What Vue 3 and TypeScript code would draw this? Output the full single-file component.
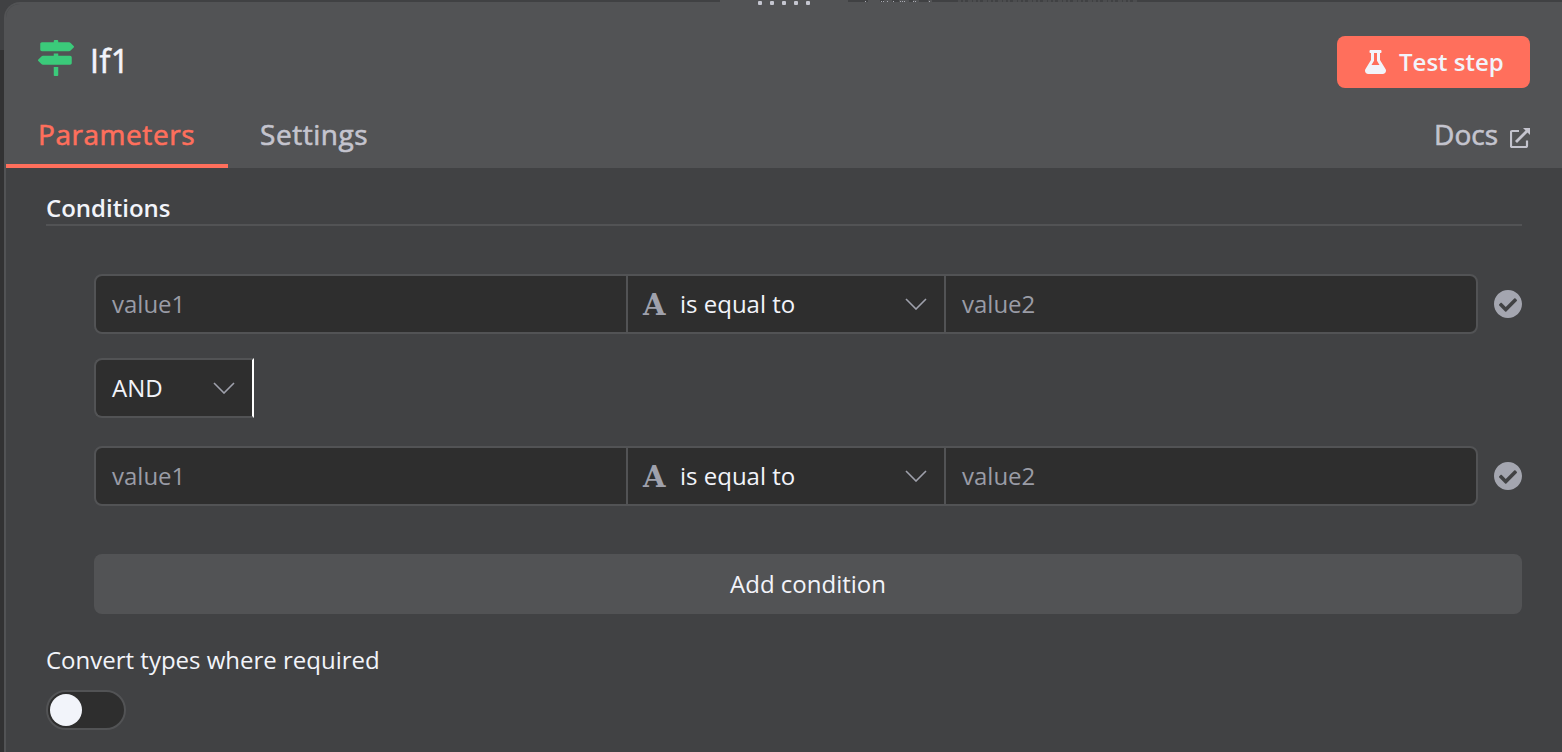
<script setup lang="ts">
import { ref } from 'vue'

interface Condition {
  id: number
  left: string
  operator: string
  right: string
}

const tabs = ['Parameters', 'Settings']
const activeTab = ref('Parameters')
const convertTypes = ref(false)
const conditions = ref<Condition[]>([
  { id: 1, left: '', operator: 'is equal to', right: '' },
  { id: 2, left: '', operator: 'is equal to', right: '' },
])

function addCondition() {
  conditions.value.push({ id: Date.now(), left: '', operator: 'is equal to', right: '' })
}
</script>

<template>
  <div class="backdrop">
    <div class="handle"><i v-for="n in 5" :key="n" class="dot"></i></div>
    <svg class="edge" viewBox="0 0 292 2" shape-rendering="crispEdges">
      <path fill="#525355" d="M20 0h12v2h-12zM36 0h8v2h-8zM51 0h10v2h-10zM65 0h6v2h-6zM80 0h4v2h-4z" />
      <path fill="#a9aab2" d="M17 1h1v1h-1zM33 1h1v1h-1zM35 1h1v1h-1zM39 1h1v1h-1zM45 1h1v1h-1zM52 1h1v1h-1zM54 1h1v1h-1zM56 1h1v1h-1zM65 1h1v1h-1zM67 1h1v1h-1zM81 1h1v1h-1z" />
      <path stroke="#4c4d4f" stroke-width="2" stroke-dasharray="3 2 2 3 4 1" d="M110 1H290" />
    </svg>
    <main class="panel">
      <header class="header">
        <div class="title-row">
          <svg class="node-icon" viewBox="0 0 512 512"><path fill="currentColor" d="M507.31 84.69L464 41.37c-6-6-14.14-9.37-22.63-9.37H288V16c0-8.84-7.16-16-16-16h-32c-8.84 0-16 7.16-16 16v16H56c-13.25 0-24 10.75-24 24v80c0 13.25 10.75 24 24 24h385.37c8.49 0 16.62-3.37 22.63-9.37l43.31-43.31c6.25-6.26 6.25-16.38 0-22.63zM224 496c0 8.84 7.16 16 16 16h32c8.84 0 16-7.16 16-16V384h-64v112zm232-272H288v-32h-64v32H70.63c-8.49 0-16.62 3.37-22.63 9.37L4.69 276.69c-6.25 6.25-6.25 16.38 0 22.63L48 342.63c6 6 14.14 9.37 22.63 9.37H456c13.25 0 24-10.75 24-24v-80c0-13.25-10.75-24-24-24z" /></svg>
          <span class="title">If1</span>
          <button class="test">
            <svg class="flask" viewBox="0 0 448 512"><path fill="currentColor" d="M437.2 403.5L320 215V64h8c13.3 0 24-10.7 24-24V24c0-13.3-10.7-24-24-24H120c-13.3 0-24 10.7-24 24v16c0 13.3 10.7 24 24 24h8v151L10.8 403.5C-18.5 450.6 15.3 512 70.9 512h306.2c55.7 0 89.4-61.5 60.1-108.5zM137.9 320l48.2-77.6c3.7-5.2 5.8-11.6 5.8-18.4V64h64v160c0 6.9 2.2 13.2 5.8 18.4l48.2 77.6h-172z" /></svg>
            <span class="test-label">Test step</span>
          </button>
        </div>
        <nav class="tabs">
          <a v-for="tab in tabs" :key="tab" class="tab" :class="{ active: tab === activeTab }" @click="activeTab = tab"><span>{{ tab }}</span></a>
          <a class="docs">
            <span>Docs</span>
            <svg class="external" viewBox="0 0 20 20" fill="none" stroke="currentColor" stroke-width="2.2">
              <path d="M9 3H2.2Q1 3 1 4.2V17.8Q1 19 2.2 19H15.8Q17 19 17 17.8V12.5" />
              <path d="M6 14L17 3" stroke-width="2.8" />
              <path d="M13 0H20V7Z" fill="currentColor" stroke="none" />
            </svg>
          </a>
        </nav>
      </header>

      <section class="body">
        <h2 class="section-title"><span>Conditions</span></h2>
        <div class="conditions">
          <template v-for="(condition, index) in conditions" :key="condition.id">
            <div v-if="index > 0" class="combinator">
              <span>AND</span>
              <svg class="chevron" viewBox="0 0 22 12"><path d="M1 1L11 11L21 1" /></svg>
            </div>
            <div class="condition">
              <div class="fields">
                <div class="field placeholder"><span>{{ condition.left || 'value1' }}</span></div>
                <div class="field operator">
                  <span class="type">A</span>
                  <span class="operator-name">{{ condition.operator }}</span>
                  <svg class="chevron" viewBox="0 0 22 12"><path d="M1 1L11 11L21 1" /></svg>
                </div>
                <div class="field placeholder"><span>{{ condition.right || 'value2' }}</span></div>
              </div>
              <svg class="check" viewBox="8 8 496 496"><path fill="currentColor" d="M504 256c0 136.967-111.033 248-248 248S8 392.967 8 256 119.033 8 256 8s248 111.033 248 248zM227.314 387.314l184-184c6.248-6.248 6.248-16.379 0-22.627l-22.627-22.627c-6.248-6.248-16.379-6.249-22.628 0L216 308.118l-70.059-70.059c-6.248-6.248-16.379-6.248-22.628 0l-22.627 22.627c-6.248 6.248-6.248 16.379 0 22.627l104 104c6.249 6.249 16.379 6.249 22.628.001z" /></svg>
            </div>
          </template>
          <button class="add" @click="addCondition"><span>Add condition</span></button>
        </div>
        <div class="convert"><span>Convert types where required</span></div>
        <div class="switch" :class="{ on: convertTypes }" @click="convertTypes = !convertTypes"><i class="knob"></i></div>
      </section>
    </main>
  </div>
</template>

<style>
body {
  margin: 0;
  overflow: hidden;
}
</style>

<style scoped>
* {
  box-sizing: border-box;
}
.backdrop {
  position: relative;
  width: 1562px;
  height: 752px;
  padding: 2px 0 0 4px;
  overflow: hidden;
  background: linear-gradient(#404143 50px, #323233 50px);
  font-family: "Open Sans", sans-serif;
  font-size: 24px;
  line-height: 32px;
  color: #f2f4fa;
}
.handle {
  position: absolute;
  z-index: 2;
  top: 0;
  left: 720px;
  width: 128px;
  height: 6px;
  padding: 1px 0 0 38px;
  display: flex;
  gap: 8px;
  background: #525355;
}
.dot {
  width: 4px;
  height: 4px;
  border-radius: 1px;
  background: #c5c6d0;
}
.edge {
  position: absolute;
  top: 0;
  left: 848px;
  width: 292px;
  height: 2px;
}
.panel {
  height: 760px;
  border: 2px solid #525355;
  border-right: 0;
  border-radius: 16px 0 0 0;
  background: #414244;
  overflow: hidden;
}
.header {
  height: 164px;
  background: #525355;
}
.title-row {
  height: 100px;
  padding: 32px 32px 0;
  display: flex;
  align-items: flex-start;
}
.node-icon {
  width: 36px;
  height: 36px;
  margin-top: 4px;
  color: #3bca7a;
}
.title {
  margin: 4px 0 0 16px;
  font-size: 32px;
  line-height: 41px;
  letter-spacing: 0.5px;
  -webkit-text-stroke: 0.6px currentColor;
}
.test {
  width: 193px;
  height: 52px;
  margin-left: auto;
  padding: 0 0 0 28px;
  display: flex;
  align-items: center;
  gap: 13px;
  border: 0;
  border-radius: 8px;
  background: #ff6f5c;
  color: #f2f4fa;
  font: 600 24px/32px "Open Sans", sans-serif;
}
.flask {
  width: 21px;
  height: 24px;
}
.tabs {
  height: 64px;
  padding-right: 32px;
  display: flex;
  font-size: 28px;
  color: #c4c4ce;
  -webkit-text-stroke: 0.6px currentColor;
}
.tab {
  height: 64px;
  padding: 12px 32px 0;
  border-bottom: 4px solid transparent;
  line-height: 36px;
  letter-spacing: 0.55px;
}
.tab.active {
  width: 222px;
  border-color: #ff6f5c;
  color: #ff6f5c;
}
.docs {
  margin-left: auto;
  padding-top: 12px;
  display: flex;
  gap: 12px;
  line-height: 36px;
}
.external {
  width: 20px;
  height: 20px;
  margin-top: 12px;
}
.body {
  padding: 24px 40px 0;
}
.section-title {
  height: 34px;
  margin: 0;
  border-bottom: 2px solid #525355;
  font-size: 24px;
  font-weight: 600;
  line-height: 32px;
}
.conditions {
  padding: 48px 0 0 48px;
}
.condition {
  display: flex;
  align-items: center;
  gap: 16px;
}
.fields {
  width: 1384px;
  height: 60px;
  display: grid;
  grid-template-columns: 532px 318px 1fr;
  border: 2px solid #525355;
  border-radius: 8px;
  background: #2e2e2e;
  overflow: hidden;
}
.field {
  padding: 12px 16px 0;
  border-right: 2px solid #525355;
}
.field:last-child {
  border-right: 0;
}
.placeholder {
  color: #9a9ca6;
}
.operator {
  display: flex;
  padding: 0 17px 0 15px;
  align-items: center;
}
.type {
  width: 22px;
  padding-top: 2px;
  font: 700 29px/32px "DejaVu Serif", serif;
  color: #9fa1ac;
}
.operator-name {
  margin-left: 15px;
}
.chevron {
  width: 22px;
  height: 12px;
  margin-left: auto;
  fill: none;
  stroke: #9fa1ac;
  stroke-width: 1.6;
}
.check {
  width: 28px;
  height: 28px;
  color: #a4a6b0;
}
.combinator {
  width: 160px;
  height: 60px;
  margin: 24px 0 28px;
  padding-right: 2px;
  padding: 0 17px 0 16px;
  display: flex;
  align-items: center;
  border: 2px solid #525355;
  border-right-color: #fff;
  border-radius: 8px 0 0 8px;
  background: #2e2e2e;
}
.add {
  width: 1428px;
  height: 60px;
  margin-top: 48px;
  border: 0;
  border-radius: 8px;
  background: #525355;
  color: #f2f4fa;
  font: 24px/32px "Open Sans", sans-serif;
}
.convert {
  margin-top: 30px;
}
.switch {
  width: 80px;
  height: 40px;
  margin-top: 14px;
  padding: 2px;
  border: 2px solid #525355;
  border-radius: 20px;
  background: #2e2e2e;
}
.knob {
  display: block;
  width: 32px;
  height: 32px;
  border-radius: 50%;
  background: #f2f4fa;
}
.switch.on .knob {
  margin-left: auto;
}
</style>
